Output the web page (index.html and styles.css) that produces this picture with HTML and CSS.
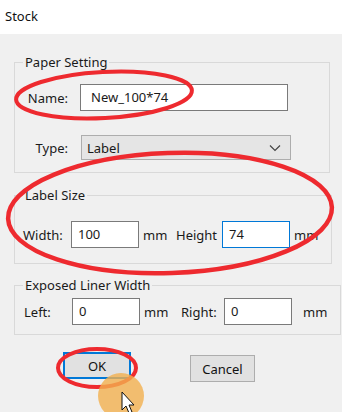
FILE: index.html
```html
<!DOCTYPE html>
<html lang="en">
<head>
  <meta charset="UTF-8">
  <title>Stock</title>
  <link rel="stylesheet" href="styles.css">
</head>
<body>
  <div class="titlebar">Stock</div>

  <div class="dialog">
    <fieldset class="group paper">
      <legend>Paper Setting</legend>
      <div class="row">
        <span class="lbl">Name:</span>
        <div class="box name">New_100*74</div>
      </div>
      <div class="row type-row">
        <span class="lbl">Type:</span>
        <div class="select">
          <span>Label</span>
          <svg width="12" height="8" viewBox="0 0 12 8"><path d="M1 1.5 L6 6.5 L11 1.5" fill="none" stroke="#444" stroke-width="1.2"/></svg>
        </div>
      </div>
    </fieldset>

    <fieldset class="group size">
      <legend>Label Size</legend>
      <div class="row">
        <span class="lbl-w">Width:</span>
        <div class="box small">100</div>
        <span class="unit">mm</span>
        <span class="lbl-h">Height</span>
        <div class="box small focus">74</div>
        <span class="unit">mm</span>
      </div>
    </fieldset>

    <fieldset class="group liner">
      <legend>Exposed Liner Width</legend>
      <div class="row">
        <span class="lbl-l">Left:</span>
        <div class="box small">0</div>
        <span class="unit">mm</span>
        <span class="lbl-r">Right:</span>
        <div class="box small">0</div>
        <span class="unit wide">mm</span>
      </div>
    </fieldset>

    <div class="buttons">
      <button class="btn ok">OK</button>
      <button class="btn cancel">Cancel</button>
    </div>
  </div>

  <!-- annotation marks drawn over the dialog -->
  <svg class="marks" width="342" height="412" viewBox="0 0 342 412">
    <ellipse cx="104" cy="95" rx="88" ry="23" transform="rotate(-3 104 95)" fill="none" stroke="#ee2a2f" stroke-width="4"/>
    <ellipse cx="170" cy="213" rx="162" ry="60" transform="rotate(-2 170 213)" fill="none" stroke="#ee2a2f" stroke-width="4.5"/>
    <ellipse cx="97" cy="368" rx="39" ry="19" fill="none" stroke="#ee2a2f" stroke-width="4"/>
    <circle cx="121" cy="396" r="23" fill="#f3b04f" fill-opacity="0.8"/>
    <path d="M122 392 L122 410 L126 406 L129 413 L132 412 L129 405 L134 405 Z" fill="#fff" stroke="#111" stroke-width="1"/>
  </svg>
</body>
</html>
```

FILE: styles.css
```css
* {
  box-sizing: border-box;
}

body {
  margin: 0;
  width: 342px;
  height: 412px;
  overflow: hidden;
  position: relative;
  background: #f0f0f0;
  font-family: 'Noto Sans', 'Liberation Sans', sans-serif;
  font-size: 13px;
  color: #1a1a1a;
}

.titlebar {
  height: 34px;
  background: #fff;
  padding-left: 5px;
  line-height: 33px;
  font-size: 13px;
  color: #111;
}

.dialog {
  padding: 19px 11px 0 14px;
}

.group {
  margin: 0;
  width: 316px;
  border: 1px solid #d9d9d9;
  padding: 0 8px;
}

.group legend {
  padding: 0 2px;
  line-height: 18px;
}

.row {
  display: flex;
  align-items: center;
}

.box {
  height: 27px;
  background: #fff;
  border: 1px solid #7a7a7a;
  padding: 0 6px;
  line-height: 24px;
}

.box.focus {
  border-color: #0078d7;
}

/* Paper Setting */
.paper {
  padding-top: 13px;
  padding-bottom: 12px;
}

.paper .lbl {
  width: 45px;
  text-align: right;
}

.paper .name {
  width: 208px;
  margin-left: 12px;
  padding-left: 10px;
}

.type-row {
  margin-top: 24px;
}

.select {
  width: 210px;
  height: 25px;
  margin-left: 13px;
  background: #e5e5e5;
  border: 1px solid #adadad;
  display: flex;
  align-items: center;
  justify-content: space-between;
  padding: 0 9px 0 5px;
}

/* Label Size */
.size {
  margin-top: 13px;
  padding-top: 17px;
  padding-bottom: 15px;
}

.box.small {
  width: 68px;
}

.lbl-w {
  width: 48px;
}

.unit {
  margin-left: 4px;
  width: 29px;
}

.unit.wide {
  margin-left: 11px;
}

.lbl-h {
  margin-left: 4px;
  width: 46px;
}

/* Exposed Liner Width */
.liner {
  margin-top: 12px;
  padding-top: 4px;
  padding-bottom: 9px;
}

.lbl-l {
  width: 48px;
  margin-left: 1px;
}

.lbl-r {
  margin-left: 8px;
  width: 43px;
}

/* buttons */
.buttons {
  display: flex;
  align-items: flex-start;
  margin-top: 17px;
  padding-left: 49px;
}

.btn {
  font-family: inherit;
  font-size: 13px;
  color: #111;
  background: #e1e1e1;
  border: 1px solid #adadad;
  padding: 0;
}

.btn.ok {
  width: 68px;
  height: 27px;
  border: 2px solid #0078d7;
}

.btn.cancel {
  width: 65px;
  height: 27px;
  margin-left: 59px;
  margin-top: 3px;
}

.marks {
  position: absolute;
  left: 0;
  top: 0;
  pointer-events: none;
}
```
